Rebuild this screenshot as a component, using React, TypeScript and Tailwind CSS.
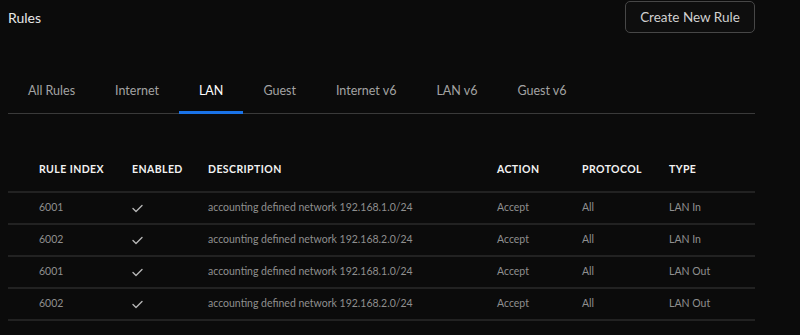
import React from "react";

const tabs = ["All Rules", "Internet", "LAN", "Guest", "Internet v6", "LAN v6", "Guest v6"];

const rows = [
  { idx: "6001", desc: "accounting defined network 192.168.1.0/24", type: "LAN In" },
  { idx: "6002", desc: "accounting defined network 192.168.2.0/24", type: "LAN In" },
  { idx: "6001", desc: "accounting defined network 192.168.1.0/24", type: "LAN Out" },
  { idx: "6002", desc: "accounting defined network 192.168.2.0/24", type: "LAN Out" },
];

function Check() {
  return (
    <svg width="11" height="9" viewBox="0 0 11 9" fill="none">
      <polyline points="1,4.5 4,7.5 10,1.5" stroke="#b5b5b5" strokeWidth="1.4" strokeLinecap="round" strokeLinejoin="round" />
    </svg>
  );
}

export default function App() {
  return (
    <div className="w-[800px] h-[335px] bg-[#0b0b0b] overflow-hidden" style={{ fontFamily: "Lato, 'Noto Sans', sans-serif" }}>
      <div className="ml-2 w-[747px]">
        <div className="flex items-center justify-between h-[34px]">
          <div className="text-[14px] text-[#e8e8e8]">Rules</div>
          <button className="h-[32px] w-[130px] rounded-[5px] border border-[#474747] bg-[#0e0e0e] text-[13.5px] text-[#d0d0d0]">
            Create New Rule
          </button>
        </div>
        <div className="mt-[32px] flex border-b border-[#3a3a3a]">
          {tabs.map((t) => {
            const active = t === "LAN";
            return (
              <div key={t} className="relative h-[47px] px-5 pt-1 flex items-center">
                <span className={active ? "text-[12.5px] text-white" : "text-[12.5px] text-[#a3a3a3]"}>{t}</span>
                {active && <div className="absolute left-0 right-0 bottom-[-1px] h-[3px] bg-[#1a73e8]" />}
              </div>
            );
          })}
        </div>
        <div className="mt-[35px]">
          <div className="flex items-center h-[44px] border-b-2 border-[#222222] text-[10.5px] font-bold tracking-[0.04em] text-[#f2f2f2]">
            <div className="pl-[31px] w-[124px]">RULE INDEX</div>
            <div className="w-[76px]">ENABLED</div>
            <div className="w-[289px]">DESCRIPTION</div>
            <div className="w-[85px]">ACTION</div>
            <div className="w-[87px]">PROTOCOL</div>
            <div className="flex-1">TYPE</div>
          </div>
          {rows.map((r, i) => (
            <div key={i} className="flex items-center h-[32px] border-b-2 border-[#222222] text-[10.5px] text-[#8f8f8f]">
              <div className="pl-[31px] w-[124px]">{r.idx}</div>
              <div className="w-[76px] flex items-center"><Check /></div>
              <div className="w-[289px]">{r.desc}</div>
              <div className="w-[85px]">Accept</div>
              <div className="w-[87px]">All</div>
              <div className="flex-1">{r.type}</div>
            </div>
          ))}
        </div>
      </div>
    </div>
  );
}
